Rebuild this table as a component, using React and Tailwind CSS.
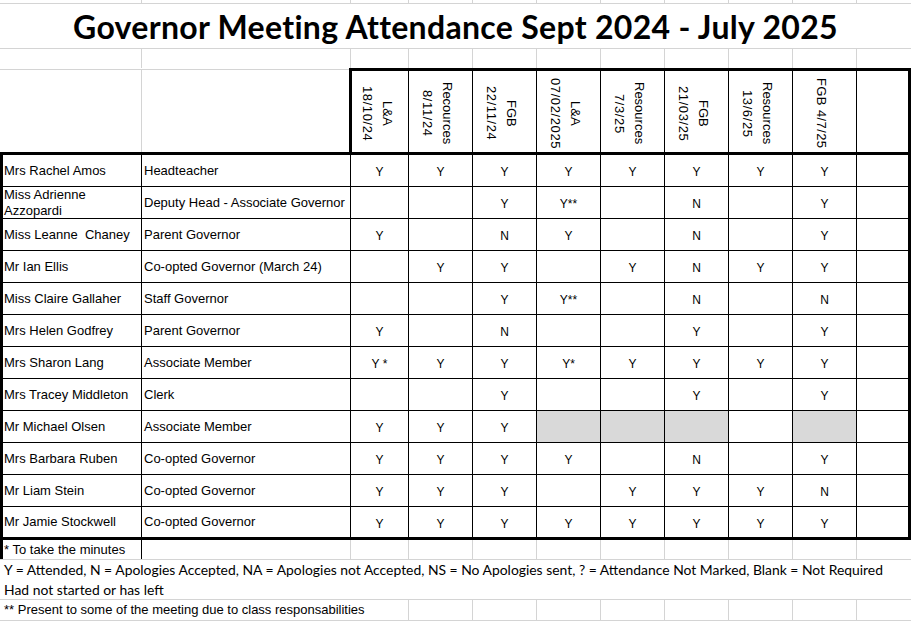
const arial = "font-['Liberation_Sans',Arial,sans-serif]";
const calibri = "font-['Lato','Noto_Sans',sans-serif]";

const meetings = [
  ["L&A", "18/10/24"],
  ["Recources", "8/11/24"],
  ["FGB", "22/11/24"],
  ["L&A", "07/02/2025"],
  ["Resources", "7/3/25"],
  ["FGB", "21/03/25"],
  ["Resources", "13/6/25"],
  ["FGB 4/7/25"],
];

const governors = [
  { name: "Mrs Rachel Amos", role: "Headteacher", marks: ["Y", "Y", "Y", "Y", "Y", "Y", "Y", "Y"] },
  { name: "Miss Adrienne Azzopardi", role: "Deputy Head - Associate Governor", marks: ["", "", "Y", "Y**", "", "N", "", "Y"] },
  { name: "Miss Leanne\u00a0 Chaney", role: "Parent Governor", marks: ["Y", "", "N", "Y", "", "N", "", "Y"] },
  { name: "Mr Ian Ellis", role: "Co-opted Governor (March 24)", marks: ["", "Y", "Y", "", "Y", "N", "Y", "Y"] },
  { name: "Miss Claire Gallaher", role: "Staff Governor", marks: ["", "", "Y", "Y**", "", "N", "", "N"] },
  { name: "Mrs Helen Godfrey", role: "Parent Governor", marks: ["Y", "", "N", "", "", "Y", "", "Y"] },
  { name: "Mrs Sharon Lang", role: "Associate Member", marks: ["Y *", "Y", "Y", "Y*", "Y", "Y", "Y", "Y"] },
  { name: "Mrs Tracey Middleton", role: "Clerk", marks: ["", "", "Y", "", "", "Y", "", "Y"] },
  { name: "Mr Michael Olsen", role: "Associate Member", marks: ["Y", "Y", "Y", "", "", "", "", ""], shaded: [3, 4, 5, 7] },
  { name: "Mrs Barbara Ruben", role: "Co-opted Governor", marks: ["Y", "Y", "Y", "Y", "", "N", "", "Y"] },
  { name: "Mr Liam Stein", role: "Co-opted Governor", marks: ["Y", "Y", "Y", "", "Y", "Y", "Y", "N"] },
  { name: "Mr Jamie Stockwell", role: "Co-opted Governor", marks: ["Y", "Y", "Y", "Y", "Y", "Y", "Y", "Y"] },
];

const seven = [0, 1, 2, 3, 4, 5, 6];

// empty spreadsheet row, light gridlines only
const GridRow = ({ className }) => (
  <div className={"flex border-b border-[#d4d4d4] " + className}>
    <div className="w-[142px] border-r border-[#d4d4d4]" />
    <div className="w-[209px] border-r border-[#d4d4d4]" />
    <div className="w-[58px] border-r border-[#d4d4d4]" />
    {seven.map((i) => (
      <div key={i} className="w-[64px] border-r border-[#d4d4d4]" />
    ))}
    <div className="flex-1" />
  </div>
);

const App = () => {
  return (
    <div className={"w-[911px] h-[621px] bg-white text-black overflow-hidden " + arial}>
      <GridRow className="h-[4px]" />

      <div className={"h-[45px] border-b border-[#d4d4d4] flex items-center justify-center pt-[2px] text-[32px] tracking-[0.3px] font-bold leading-none whitespace-nowrap " + calibri}>
        Governor Meeting Attendance Sept 2024 - July 2025
      </div>

      <GridRow className="h-[19px] border-b-0" />

      {/* header with rotated meeting names */}
      <div className="flex h-[87px] border-b-[3px] border-black">
        <div className="w-[349px] mt-px border-t border-[#d4d4d4] flex">
          <div className="w-[142px] border-r border-[#d4d4d4]" />
          <div className="flex-1" />
        </div>
        <div className="flex-1 flex border-t-[3px] border-l-[3px] border-r-[3px] border-black">
          {meetings.map((m, i) => (
            <div
              key={i}
              className={(i === 0 ? "w-[57px]" : "w-[64px]") + " border-r border-black flex items-center justify-center pr-[7px] pt-[4px]"}
            >
              <div className="[writing-mode:vertical-rl] text-center text-[13px] leading-[20px] whitespace-nowrap">
                {m.length === 2 ? (
                  <>
                    <div>{m[0]}</div>
                    <div className="tracking-[0.6px]">{m[1]}</div>
                  </>
                ) : (
                  <div className="tracking-[0.4px]">{m[0]}</div>
                )}
              </div>
            </div>
          ))}
          <div className="flex-1" />
        </div>
      </div>

      {/* attendance rows */}
      <div className="border-l-[3px] border-r-[3px] border-b-[3px] border-black">
        {governors.map((g, r) => (
          <div
            key={r}
            className={"flex " + (r === governors.length - 1 ? "h-[30px]" : "h-[32px] border-b border-black")}
          >
            <div className="w-[139px] border-r border-black flex items-center pl-px text-[13px] leading-[16px]">
              {g.name}
            </div>
            <div className="w-[209px] border-r border-black flex items-center pl-[2px] text-[13px] whitespace-nowrap">
              {g.role}
            </div>
            {g.marks.map((v, i) => (
              <div
                key={i}
                className={
                  (i === 0 ? "w-[58px]" : "w-[64px]") +
                  " border-r border-black flex items-center justify-center pt-[3px] text-[12px] whitespace-pre " +
                  (g.shaded && g.shaded.includes(i) ? "bg-[#d9d9d9]" : "")
                }
              >
                {v}
              </div>
            ))}
            <div className="flex-1" />
          </div>
        ))}
      </div>

      {/* notes */}
      <div className="flex h-[20px] border-b border-[#d4d4d4]">
        <div className="w-[142px] border-l-[3px] border-r border-black flex items-center pl-px text-[13px]">
          * To take the minutes
        </div>
        <div className="w-[209px] border-r border-[#d4d4d4]" />
        <div className="w-[58px] border-r border-[#d4d4d4]" />
        {seven.map((i) => (
          <div key={i} className="w-[64px] border-r border-[#d4d4d4]" />
        ))}
        <div className="flex-1" />
      </div>

      <div className={"h-[40px] border-b border-[#d4d4d4] pl-[4px] text-[13.9px] leading-[20px] whitespace-nowrap " + calibri}>
        <div>Y = Attended, N = Apologies Accepted, NA = Apologies not Accepted, NS = No Apologies sent, ? = Attendance Not Marked, Blank = Not Required</div>
        <div>Had not started or has left</div>
      </div>

      <div className="flex h-[21px] border-b border-[#d4d4d4]">
        <div className="w-[409px] border-r border-[#d4d4d4] flex items-center pl-[4px] text-[13px] whitespace-nowrap">
          ** Present to some of the meeting due to class responsabilities
        </div>
        {seven.map((i) => (
          <div key={i} className="w-[64px] border-r border-[#d4d4d4]" />
        ))}
        <div className="flex-1" />
      </div>
    </div>
  );
};

export default App;
